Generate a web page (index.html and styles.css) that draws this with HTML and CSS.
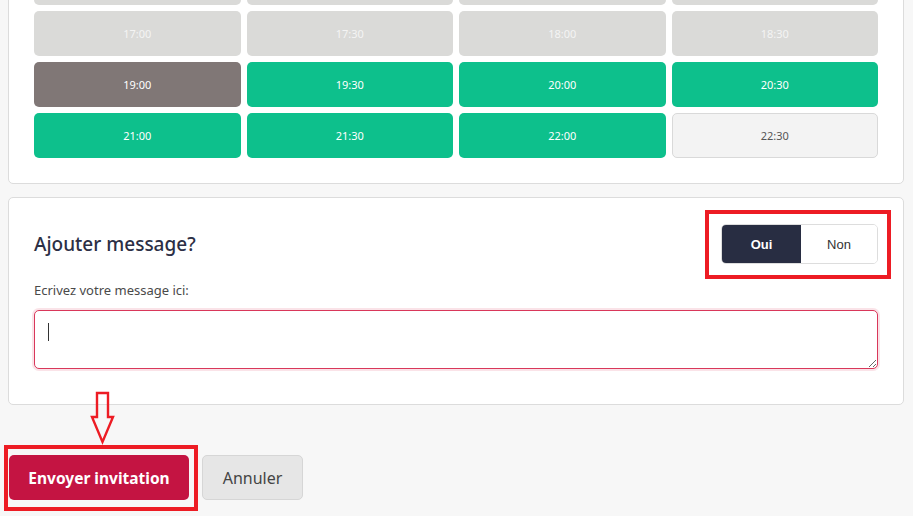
FILE: index.html
```html
<!DOCTYPE html>
<html lang="fr">
<head>
<meta charset="utf-8">
<title>Invitation</title>
<link rel="stylesheet" href="styles.css">
</head>
<body>
<main class="page">
  <section class="card slots-card">
    <div class="slots">
      <button class="slot slot-off" aria-label="16:00"></button>
      <button class="slot slot-off" aria-label="16:30"></button>
      <button class="slot slot-off" aria-label="16:00"></button>
      <button class="slot slot-off" aria-label="16:30"></button>
      <button class="slot slot-off">17:00</button>
      <button class="slot slot-off">17:30</button>
      <button class="slot slot-off">18:00</button>
      <button class="slot slot-off">18:30</button>
      <button class="slot slot-selected">19:00</button>
      <button class="slot slot-free">19:30</button>
      <button class="slot slot-free">20:00</button>
      <button class="slot slot-free">20:30</button>
      <button class="slot slot-free">21:00</button>
      <button class="slot slot-free">21:30</button>
      <button class="slot slot-free">22:00</button>
      <button class="slot slot-light">22:30</button>
    </div>
  </section>

  <section class="card message-card">
    <div class="message-head">
      <h2 class="message-title">Ajouter message?</h2>
      <div class="toggle">
        <button class="toggle-btn toggle-on">Oui</button>
        <button class="toggle-btn">Non</button>
      </div>
    </div>
    <label class="message-label" for="msg">Ecrivez votre message ici:</label>
    <div class="textarea-wrap">
      <textarea id="msg" class="message-input"></textarea>
      <span class="caret"></span>
    </div>
  </section>

  <div class="actions">
    <button class="btn btn-primary">Envoyer invitation</button>
    <button class="btn btn-secondary">Annuler</button>
  </div>

  <div class="mark mark-toggle"></div>
  <div class="mark mark-send"></div>
  <svg class="arrow" width="30" height="56" viewBox="0 0 30 56">
    <path d="M9 2 H20 V26 H25 L14.5 51 L4 26 H9 Z" fill="none" stroke="#ed1c24" stroke-width="2.4" stroke-linejoin="miter"/>
  </svg>
</main>
</body>
</html>
```

FILE: styles.css
```css
* { box-sizing: border-box; }
html, body { margin: 0; padding: 0; }
body {
  background: #f7f7f7;
  font-family: "Noto Sans", "Open Sans", sans-serif;
  width: 913px;
  height: 516px;
  overflow: hidden;
}
.page {
  position: relative;
  display: flow-root;
  padding: 0 9px 0 8px;
}
.card {
  background: #fff;
  border: 1px solid #dcdcdc;
  border-radius: 5px;
  padding: 25px;
}
.slots-card {
  margin-top: -66px;
}
.slots {
  display: grid;
  grid-template-columns: repeat(4, 1fr);
  gap: 6px;
}
.slot {
  height: 45px;
  border: 0;
  border-radius: 5px;
  font-family: "Noto Sans", sans-serif;
  font-size: 11px;
  color: #fff;
  padding: 0;
}
.slot-off { background: #dadad8; color: #f4f4f4; }
.slot-selected { background: #807776; }
.slot-free { background: #0dc08c; }
.slot-light {
  background: #f3f3f3;
  border: 1px solid #d9d9d9;
  color: #555;
}
.message-card {
  margin-top: 13px;
  padding-bottom: 35px;
}
.message-head {
  display: flex;
  align-items: center;
  justify-content: space-between;
  height: 41px;
}
.message-title {
  margin: 0;
  font-size: 19px;
  font-weight: 500;
  color: #2c2f45;
}
.toggle {
  display: flex;
  width: 157px;
  height: 40px;
  border: 1px solid #dddddd;
  border-radius: 5px;
  overflow: hidden;
  margin-top: 1px;
}
.toggle-btn {
  flex: 1;
  border: 0;
  background: #fff;
  font-family: "Liberation Sans", Arial, sans-serif;
  font-size: 13px;
  color: #333;
  padding: 0;
}
.toggle-on {
  flex: 0 0 79px;
  background: #282d42;
  color: #fff;
  font-weight: bold;
}
.message-label {
  display: block;
  margin-top: 17px;
  font-size: 13px;
  line-height: 18px;
  color: #4a4a4a;
}
.textarea-wrap {
  position: relative;
  margin-top: 11px;
}
.message-input {
  display: block;
  width: 100%;
  height: 59px;
  border: 1px solid #d9375a;
  border-radius: 5px;
  box-shadow: 0 0 0 2px rgba(220, 55, 90, 0.14);
  outline: none;
  resize: vertical;
  background: #fff;
}
.caret {
  position: absolute;
  left: 14px;
  top: 13px;
  width: 1px;
  height: 18px;
  background: #333;
}
.actions {
  display: flex;
  gap: 13px;
  margin-top: 50px;
  margin-left: 1px;
}
.btn {
  height: 45px;
  border-radius: 5px;
  font-family: "Noto Sans", sans-serif;
  font-size: 16px;
  padding: 0;
}
.btn-primary {
  width: 180px;
  background: #c41442;
  border: 0;
  color: #fff;
  font-weight: bold;
  font-size: 15.5px;
}
.btn-secondary {
  width: 101px;
  background: #e6e6e6;
  border: 1px solid #d6d6d6;
  color: #444;
}
.mark {
  position: absolute;
  border: 4px solid #ed1c24;
}
.mark-toggle {
  left: 705px;
  top: 210px;
  width: 186px;
  height: 69px;
}
.mark-send {
  left: 4px;
  top: 445px;
  width: 194px;
  height: 66px;
}
.arrow {
  position: absolute;
  left: 88px;
  top: 391px;
}
```
